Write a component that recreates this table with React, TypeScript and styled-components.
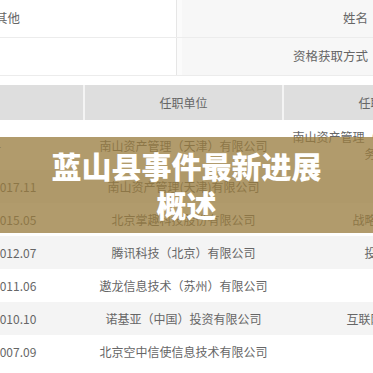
import React from 'react';
import styled, { createGlobalStyle } from 'styled-components';

const GlobalStyle = createGlobalStyle`
  html, body {
    margin: 0;
    padding: 0;
    background: #fff;
    overflow: hidden;
  }
  body {
    font-family: "Noto Sans CJK SC", "Microsoft YaHei", sans-serif;
    color: #666;
  }
`;

type Job = {
  date: string;
  indent?: number;
  company: string;
  title?: string;
};

const jobs: Job[] = [
  { date: '2019.05 -', indent: -42, company: '南山资产管理（天津）有限公司', title: '南山资产管理（天津）有限公司财务总监' },
  { date: '2017.11', company: '南山资产管理(天津)有限公司' },
  { date: '2015.05', company: '北京掌趣科技股份有限公司', title: '战略投资部' },
  { date: '2012.07', company: '腾讯科技（北京）有限公司', title: '投资部' },
  { date: '2011.06', company: '遨龙信息技术（苏州）有限公司' },
  { date: '2010.10', company: '诺基亚（中国）投资有限公司', title: '互联网事业部' },
  { date: '2007.09', company: '北京空中信使信息技术有限公司' },
];

const Page = () => {
  return (
    <Screen>
      <InfoTable>
        <InfoRow>
          <ValueCell>其他</ValueCell>
          <LabelCell>姓名</LabelCell>
        </InfoRow>
        <InfoRow>
          <ValueCell />
          <LabelCell>资格获取方式</LabelCell>
        </InfoRow>
      </InfoTable>

      <JobTable>
        <HeadRow>
          <HeadCell $first />
          <HeadCell>任职单位</HeadCell>
          <HeadCell>任职职务</HeadCell>
        </HeadRow>
        {jobs.map((job, i) => (
          <JobRow key={job.date} $striped={i % 2 === 1}>
            <DateCell $indent={job.indent ?? 0}>{job.date}</DateCell>
            <TextCell>{job.company}</TextCell>
            <TextCell>{job.title}</TextCell>
          </JobRow>
        ))}
      </JobTable>

      <Banner>
        <Title>蓝山县事件最新进展概述</Title>
      </Banner>
    </Screen>
  );
};

const Screen = styled.main`
  position: relative;
  width: 373px;
  height: 373px;
  overflow: hidden;
  font-size: 12px;
`;

const InfoTable = styled.section`
  display: flex;
  flex-direction: column;
  margin-left: -7px;
  margin-bottom: 9px;
`;

const InfoRow = styled.div`
  display: grid;
  grid-template-columns: 184px 1fr;
  height: 37px;
  border-bottom: 1px solid #ececec;
`;

const ValueCell = styled.div`
  display: flex;
  align-items: center;
  padding: 0 2px 2px;
  font-size: 12.5px;
  border-right: 1px solid #e6e6e6;
`;

const LabelCell = styled.div`
  display: flex;
  align-items: center;
  justify-content: flex-end;
  padding: 0 5px 2px;
  font-size: 12.5px;
  background: #f7f7f7;
  border-left: 5px solid #fbfbfb;
`;

const JobTable = styled.section`
  margin-left: -17px;
  display: flex;
  flex-direction: column;
`;

const HeadRow = styled.div`
  display: grid;
  grid-template-columns: 100px 199px 199px;
  height: 35px;
  background: #dedede;
`;

const HeadCell = styled.div<{ $first?: boolean }>`
  display: flex;
  align-items: center;
  justify-content: center;
  border-left: ${(p) => (p.$first ? 'none' : '2px solid #f4f4f4')};
  color: #666;
`;

const JobRow = styled.div<{ $striped: boolean }>`
  display: grid;
  grid-template-columns: 100px 199px 199px;
  background: ${(p) => (p.$striped ? '#f4f4f4' : '#fff')};
`;

const DateCell = styled.div<{ $indent: number }>`
  display: flex;
  align-items: center;
  padding: 8px 0 8px 10px;
  line-height: 17px;
  white-space: nowrap;
  overflow: hidden;
  text-indent: ${(p) => p.$indent}px;
`;

const TextCell = styled.div`
  display: flex;
  align-items: center;
  justify-content: center;
  text-align: center;
  padding: 8px 5px 8px 7px;
  line-height: 17px;
`;

const Banner = styled.div`
  position: absolute;
  left: 0;
  right: 0;
  top: 137px;
  height: 96px;
  box-sizing: border-box;
  padding: 9px 46px;
  display: flex;
  align-items: center;
  justify-content: center;
  background: rgba(152, 124, 62, 0.76);
`;

const Title = styled.h1`
  margin: 0;
  color: #fff;
  font-size: 30px;
  font-weight: 900;
  line-height: 39px;
  text-align: center;
`;

export default function App() {
  return (
    <>
      <GlobalStyle />
      <Page />
    </>
  );
}
